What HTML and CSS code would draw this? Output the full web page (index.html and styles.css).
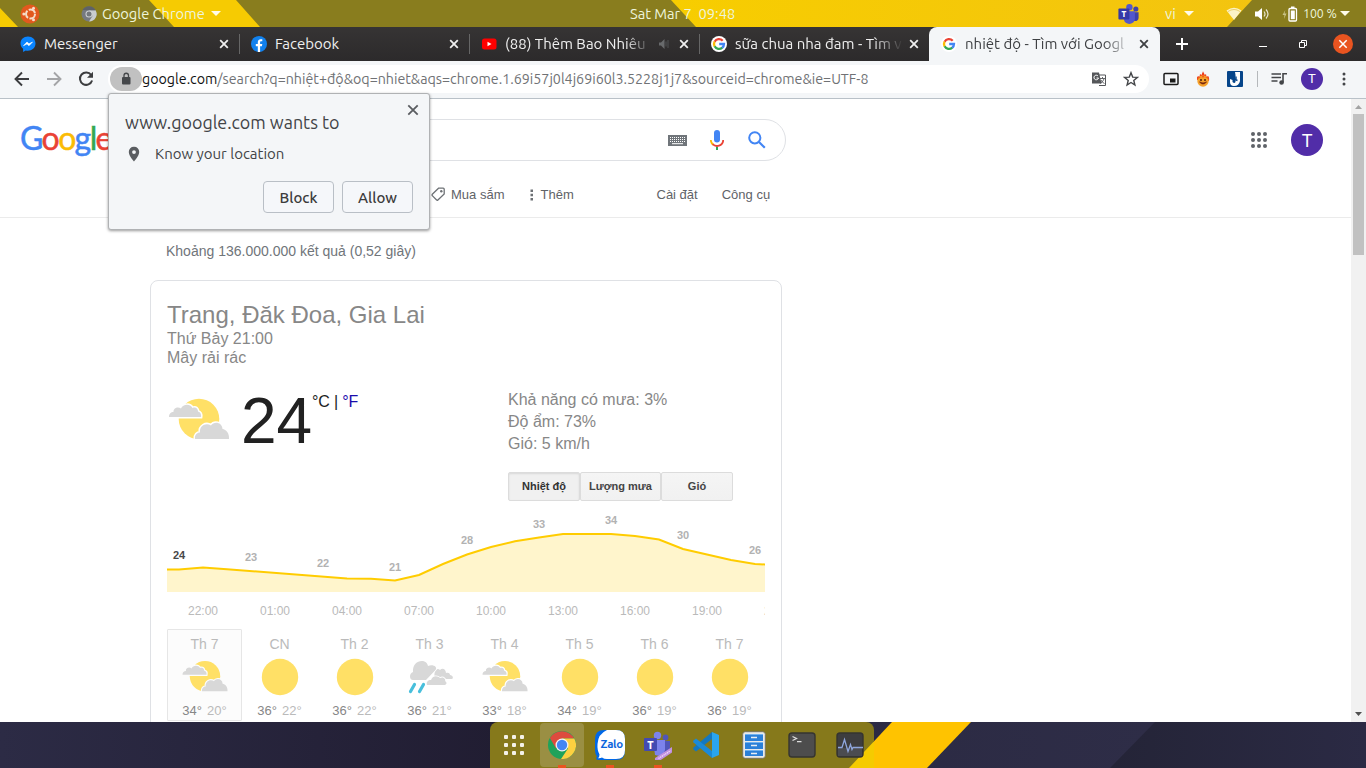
FILE: index.html
```html
<!DOCTYPE html>
<html lang="vi">
<head>
<meta charset="utf-8">
<title>nhiệt độ - Tìm với Google</title>
<link rel="stylesheet" href="styles.css">
</head>
<body>
<svg width="0" height="0" class="defs">
  <defs>
    <symbol id="x" viewBox="0 0 12 12"><path d="M2.200 2.200l7.600 7.600M9.800 2.200l-7.600 7.600" stroke="currentColor" stroke-width="1.800" fill="none"/></symbol>
    <symbol id="g" viewBox="0 0 16 16">
      <circle cx="8" cy="8" r="8" fill="#fff"/>
      <g fill="none" stroke-width="2.300">
        <path d="M11.700 4.700A5 5 0 0 0 3.600 5.700" stroke="#ea4335"/>
        <path d="M3.600 5.600A5 5 0 0 0 3.600 10.400" stroke="#fbbc05"/>
        <path d="M3.600 10.300A5 5 0 0 0 11.300 11.700" stroke="#34a853"/>
        <path d="M11.200 11.800A5 5 0 0 0 13 8H8.200" stroke="#4285f4"/>
      </g>
    </symbol>
    <symbol id="sun" viewBox="0 0 48 48"><circle cx="24" cy="24" r="18.200" fill="#ffe066"/></symbol>
    <symbol id="partly" viewBox="0 0 64 64">
      <circle cx="32" cy="31" r="20.300" fill="#ffe066"/>
      <g stroke="var(--tile, #fff)" stroke-width="3" paint-order="stroke" fill="#d8d8d8">
        <path d="M2 29C2 25.500 4 24 6.500 24C6 20 11 18 14 20.500C16 16 23 15.500 25.500 20C29 18.500 31 21 31 23.500C33.500 24 34.500 26.500 34 29Z"/>
        <path d="M28 51C27.500 47 30 44.500 33 44.500C32 38 39 34 44 37.500C47 33 55 34 55.500 41C59 41.500 62.500 45 62 51Z"/>
      </g>
    </symbol>
    <symbol id="rain" viewBox="0 0 48 48">
      <g fill="#d8d8d8" stroke="#fff" stroke-width="1.600" paint-order="stroke">
        <path d="M29 26C27 18 31 14 34 17C37 14 40 17 40 20C43 19 44 21 44 22C47 22 48 26 45.500 26Z"/>
        <path d="M7 27C3 27 3 20 7 19C6 6 21 5 22 13C27 11 32 14 29.500 17L20 27Z"/>
        <path d="M21 32C20 29 22 27 25 27C27 22 32 23 34 25C38 23 40 27 39 28C42 30 40 32 38 32Z"/>
      </g>
      <path d="M8.500 31.500l-4 7M17.500 31.500l-4 7" stroke="#48bfdc" stroke-width="3.200" stroke-linecap="round"/>
    </symbol>
    <symbol id="teams" viewBox="0 0 24 24">
      <circle cx="20" cy="6.500" r="2.800" fill="#3f42a8"/><circle cx="13" cy="4.500" r="3.500" fill="#5257cc"/>
      <path d="M16 10h7v6c0 4-5 5-7 2z" fill="#3f42a8"/>
      <path d="M7 9h12v8c0 7-11 8-12 1z" fill="#5257cc"/>
      <rect x="1" y="6" width="12" height="12" rx="1" fill="#3538a8"/>
      <text x="7" y="15.300" class="teams-t">T</text>
    </symbol>
  </defs>
</svg>

<header class="panel">
  <svg class="stripes" width="1366" height="27">
    <defs><linearGradient id="yg"><stop offset="0" stop-color="#f7cd00"/><stop offset="1" stop-color="#f3c410"/></linearGradient></defs>
    <path d="M0 8L18 27H0ZM149 0H236L260 27H174Z" fill="#f6cb02"/>
    <path d="M671 0H1252L1227 27H696Z" fill="url(#yg)"/>
  </svg>
  <div class="panel-left">
    <svg width="20" height="20" viewBox="0 0 20 20"><circle cx="10" cy="10" r="9.500" fill="#e2591e"/><circle cx="10.500" cy="10" r="4.500" fill="none" stroke="#f5ddc8" stroke-width="2" stroke-dasharray="8 1.420"/><g fill="#f5ddc8"><circle cx="3.800" cy="10" r="1.500"/><circle cx="13.500" cy="4.200" r="1.500"/><circle cx="13.500" cy="15.800" r="1.500"/></g></svg>
    <svg class="mini-chrome" width="16" height="16" viewBox="0 0 16 16"><circle cx="8" cy="8" r="7.500" fill="#767a80"/><path d="M8 4.200h6.600A7.500 7.500 0 0 1 8 15.500l3.500-5.500z" fill="#c9ccce"/><path d="M1.500 4A7.500 7.500 0 0 1 14.600 4.200H8z" fill="#5e6268"/><circle cx="8" cy="8" r="3.500" fill="#d0d3d5"/><circle cx="8" cy="8" r="2.500" fill="#73777c"/></svg>
    <span class="app-name">Google Chrome</span><i class="tri"></i>
  </div>
  <div class="clock">Sat Mar 7&nbsp; 09:48</div>
  <div class="panel-right">
    <svg width="23" height="22"><use href="#teams"/></svg>
    <span class="lang">vi</span><i class="tri"></i>
    <svg class="wifi" width="16" height="14" viewBox="0 0 16 14"><path d="M0.500 3.500Q8-2 15.500 3.500L8 13Z" fill="#fbf2c6"/><path d="M2 4.500Q8 0.500 14 4.500" fill="none" stroke="#e4c654" stroke-width=".8"/></svg>
    <svg class="vol" width="16" height="14" viewBox="0 0 16 14"><path d="M1 4.500h3L8 1v12L4 9.500H1z" fill="#fff"/><path d="M10 4.500q2 2.500 0 5M12 2.500q4 4.500 0 9" fill="none" stroke="#e8e5d0" stroke-width="1.200"/></svg>
    <svg class="bat" width="16" height="16" viewBox="0 0 16 16"><path d="M3.300 4L.5 9h2l-.5 4 2.500-5.500h-2z" fill="#c9c388"/><rect x="7" y="2.500" width="7.500" height="12.500" rx="1" fill="none" stroke="#fff" stroke-width="1.300"/><rect x="8.800" y="4.500" width="4" height="8.700" fill="#fff"/><rect x="9" y="0.500" width="3.500" height="2" fill="#fff"/></svg>
    <span class="pct">100 %</span><i class="tri"></i>
  </div>
</header>

<nav class="tabs">
  <div class="tab first"><svg width="16" height="16" viewBox="0 0 16 16"><path d="M8 .5C3.500.5.500 3.600.500 7.500c0 2.200 1 4 2.600 5.300V16l2.600-1.500c5 1.200 9.800-2 9.800-7C15.500 3.600 12.500.5 8 .5z" fill="#0a84ff"/><path d="M3.500 9.700L7 6l2 1.800L12.500 6 9 9.700 7 7.900z" fill="#fff" stroke="#fff" stroke-width=".6"/></svg><span class="t">Messenger</span><svg class="close" width="12" height="12"><use href="#x"/></svg></div>
  <div class="tab"><svg width="16" height="16" viewBox="0 0 16 16"><circle cx="8" cy="8" r="8" fill="#1181ee"/><path d="M6.800 16V10.200H4.800V7.900h2V6.200C6.800 4.200 8 3.200 9.700 3.200l1.600.1v2h-1C9.300 5.300 9.100 5.800 9.100 6.500v1.400h2.200l-.4 2.300H9.100V16z" fill="#fff"/></svg><span class="t">Facebook</span><svg class="close" width="12" height="12"><use href="#x"/></svg></div>
  <div class="tab"><svg width="16" height="16" viewBox="0 0 16 16"><rect x="1" y="2.500" width="14.500" height="11" rx="2.500" fill="#f00"/><path d="M6.500 5.800v4.500L10.500 8z" fill="#fff"/></svg><span class="t fade">(88) Thêm Bao Nhiêu</span><svg class="audio" width="12" height="12" viewBox="0 0 12 12"><path d="M1 4.500h2L6.500 1v10L3 7.500H1z" fill="#686a6c"/><path d="M8 3.500v5M10 2v8" stroke="#515355"/></svg><svg class="close" width="12" height="12"><use href="#x"/></svg></div>
  <div class="tab"><svg width="16" height="16"><use href="#g"/></svg><span class="t fade">sữa chua nha đam - Tìm v</span><svg class="close" width="12" height="12"><use href="#x"/></svg></div>
  <div class="tab active"><svg width="16" height="16"><use href="#g"/></svg><span class="t fade">nhiệt độ - Tìm với Googl</span><svg class="close" width="12" height="12"><use href="#x"/></svg></div>
  <svg class="plus" width="14" height="14" viewBox="0 0 14 14"><path d="M7 1v12M1 7h12" stroke="#fff" stroke-width="2"/></svg>
  <div class="winctl">
    <svg width="40" height="20" viewBox="0 0 40 20"><path d="M17 12.500h8" stroke="#fff"/></svg>
    <svg width="40" height="20" viewBox="0 0 40 20"><path d="M17.500 8.500h5v5h-5zM19.500 8V6.500h5v5H23" fill="none" stroke="#fff" /></svg>
    <svg class="shut" width="20" height="20" viewBox="0 0 20 20"><circle cx="10" cy="10" r="10" fill="#e95420"/><path d="M6.300 6.300l7.400 7.400M13.700 6.300l-7.400 7.400" stroke="#fff" stroke-width="1.500"/></svg>
  </div>
</nav>

<div class="toolbar">
  <span class="tb"><svg width="16" height="16" viewBox="0 0 16 16"><path d="M15 8H2M8 1.500L1.500 8 8 14.500" fill="none" stroke="#3c3d3f" stroke-width="1.900"/></svg></span>
  <span class="tb"><svg width="16" height="16" viewBox="0 0 16 16"><path d="M1 8h13M8 1.500L14.500 8 8 14.500" fill="none" stroke="#a4a5a7" stroke-width="1.900"/></svg></span>
  <span class="tb"><svg width="16" height="16" viewBox="0 0 16 16"><path d="M13.200 4A6.200 6.200 0 1 0 14.100 9.500" fill="none" stroke="#3c3d3f" stroke-width="2"/><path d="M15 .8v6H9z" fill="#3c3d3f"/></svg></span>
  <div class="omni">
    <span class="lock"><svg width="12" height="14" viewBox="0 0 12 14"><rect x="2" y="5" width="8.500" height="7.500" rx="1" fill="#45474a"/><path d="M4 5V3.500a2.200 2.200 0 0 1 4.500 0V5" fill="none" stroke="#45474a" stroke-width="1.300"/></svg></span>
    <span class="url"><b>google.com</b>/search?q=nhiệt+độ&amp;oq=nhiet&amp;aqs=chrome.1.69i57j0l4j69i60l3.5228j1j7&amp;sourceid=chrome&amp;ie=UTF-8</span>
    <span class="tb"><svg width="16" height="16" viewBox="0 0 16 16"><path d="M6.500 4h8v10.500H8" fill="#fff" stroke="#55575a"/><path d="M9 7.500h5M11.500 6v1.500M13 8q-1 3-4 4.500M10 9q1 2.500 3.500 3.500" fill="none" stroke="#55575a" stroke-width=".9"/><path d="M1 1.500h7l2.500 11H1z" fill="#55575a"/><path d="M7 5A2.300 2.300 0 1 0 7.500 7H5.500" fill="none" stroke="#fff"/></svg></span>
    <span class="tb"><svg width="16" height="16" viewBox="0 0 16 16"><path d="M8 1.700l1.700 4.400 4.700.3-3.600 3 1.100 4.600L8 11.500 4.100 14l1.100-4.600-3.600-3 4.700-.3z" fill="none" stroke="#434548" stroke-width="1.400"/></svg></span>
  </div>
  <span class="tb"><svg width="16" height="16" viewBox="0 0 16 16"><rect x="1" y="2.500" width="14" height="11" rx="1" fill="none" stroke="#1a1a1a" stroke-width="1.500"/><rect x="7" y="7.500" width="5.500" height="4" fill="#1a1a1a"/></svg></span>
  <span class="tb"><svg width="16" height="16" viewBox="0 0 16 16"><path d="M2 9Q1.500 6 3 5l1.500 1L5 3l1.500 1L8 .3 9.800 4 11 3l.5 3L13 5q1.500 1 1 5z" fill="#ef3a18"/><circle cx="8" cy="10" r="5.700" fill="#f6a12a"/><path d="M2.500 8.500Q3 5 5 6l1 1 2-3 2 3 1-1q2-1 2.500 2.500Q11 5.500 8 6.500 5 5.500 2.500 8.500z" fill="#ee5a1b"/><path d="M4.500 11q3.500 4 7 0-3.500 2-7 0" fill="#73200e" stroke="#73200e" stroke-width=".7"/><circle cx="6" cy="9" r="1" fill="#4b1f10"/><circle cx="10" cy="9" r="1" fill="#4b1f10"/></svg></span>
  <span class="tb"><svg width="16" height="16" viewBox="0 0 16 16"><rect width="16" height="16" rx="1" fill="#06458a"/><path d="M8 1h5v9q-1 5-6 5-4 0-4-4V8l2.500 1v2q2 2 3 0V4z" fill="#fff"/><path d="M9 5.500v4M7 8l3.500 1.500" stroke="#06458a" stroke-width="1.400"/></svg></span>
  <i class="tsep"></i>
  <span class="tb"><svg width="16" height="16" viewBox="0 0 16 16"><path d="M.5 3h9.500M.5 6.500h9.500M.5 10h6" stroke="#434548" stroke-width="1.600"/><path d="M12 11V2.800h4" fill="none" stroke="#434548" stroke-width="1.600"/><circle cx="10.600" cy="11.500" r="2.300" fill="#434548"/></svg></span>
  <span class="avatar small">T</span>
  <span class="tb"><svg width="4" height="16" viewBox="0 0 4 16"><g fill="#434548"><circle cx="2" cy="3" r="1.500"/><circle cx="2" cy="8" r="1.500"/><circle cx="2" cy="13" r="1.500"/></g></svg></span>
</div>

<main class="view">
  <div class="page">
    <div class="head">
      <div class="toprow">
        <div class="logo"><span class="b">G</span><span class="r">o</span><span class="y">o</span><span class="b">g</span><span class="gr">l</span><span class="r">e</span></div>
        <div class="search">
          <svg width="19" height="11" viewBox="0 0 19 11"><rect width="19" height="11" fill="#70757a"/><path d="M2 2.500h15M2 4.500h15M2 6.500h15" stroke="#fff" stroke-width="1.100" stroke-dasharray="1 1"/><path d="M4 8.700h11" stroke="#fff"/></svg>
          <svg class="mic" width="14" height="20" viewBox="0 0 14 20"><rect x="4" y="0" width="6" height="12.500" rx="3" fill="#4285f4"/><path d="M6 16.500h2V20H6z" fill="#34a853"/><path d="M.8 10A6.200 6.200 0 0 0 3.500 15" fill="none" stroke="#fbbc05" stroke-width="1.800"/><path d="M2.700 14.200C6 17.500 13 16 13.200 10" fill="none" stroke="#ea4335" stroke-width="1.800"/></svg>
          <svg class="lens" width="18" height="18" viewBox="0 0 18 18"><circle cx="6.800" cy="6.800" r="5.600" fill="none" stroke="#4285f4" stroke-width="2"/><path d="M11 11l5.800 5.800" stroke="#4285f4" stroke-width="2.200"/></svg>
        </div>
        <svg class="apps" width="16" height="16" viewBox="0 0 16 16"><g fill="#5f6368"><circle cx="2" cy="2" r="2"/><circle cx="8" cy="2" r="2"/><circle cx="14" cy="2" r="2"/><circle cx="2" cy="8" r="2"/><circle cx="8" cy="8" r="2"/><circle cx="14" cy="8" r="2"/><circle cx="2" cy="14" r="2"/><circle cx="8" cy="14" r="2"/><circle cx="14" cy="14" r="2"/></g></svg>
        <span class="avatar">T</span>
      </div>
      <div class="modes">
        <svg width="15" height="15" viewBox="0 0 15 15"><path d="M7.500 1.200L1.300 7.300q-.6.700 0 1.300l4.300 4.400q.7.600 1.300 0L13.200 7V2.200q0-1-1-1z" fill="none" stroke="#6d7175" stroke-width="1.300"/><circle cx="10.300" cy="4.300" r="1.200" fill="#6d7175"/></svg>
        <span class="shop">Mua sắm</span>
        <svg class="dots" width="4" height="12" viewBox="0 0 4 12"><path d="M.5 .5h2.500v2.500h-2.500zM.5 4.700h2.500v2.500h-2.500zM.5 9h2.500v2.500h-2.500z" fill="#6d7175"/></svg>
        <span class="more">Thêm</span><span class="set">Cài đặt</span><span>Công cụ</span>
      </div>
    </div>
    <div class="stats">Khoảng 136.000.000 kết quả (0,52 giây)</div>
    <section class="card">
      <h1>Trang, Đăk Đoa, Gia Lai</h1>
      <div class="sub">Thứ Bảy 21:00</div>
      <div class="sub">Mây rải rác</div>
      <div class="now">
        <svg width="64" height="64"><use href="#partly"/></svg>
        <span class="deg">24</span>
        <span class="unit">°C | <a>°F</a></span>
        <div class="facts"><div>Khả năng có mưa: 3%</div><div>Độ ẩm: 73%</div><div>Gió: 5 km/h</div></div>
      </div>
      <div class="switch"><span class="on">Nhiệt độ</span><span class="mid">Lượng mưa</span><span>Gió</span></div>
      <svg class="chart" width="598" height="122" viewBox="167 501 598 122">
        <path d="M167 569.500L179 569.500L203 567.500L227 569.300L347 578.500L371 578.700L395 580.500L419 575L443 564L467 554.500L491 547L515 541.300L539 537.500L563 534H611L635 536L659 539.500L683 549L707 554.500L731 560L755 564L765 564.500V592H167Z" fill="#fff5cc"/>
        <path d="M167 569.500L179 569.500L203 567.500L227 569.300L347 578.500L371 578.700L395 580.500L419 575L443 564L467 554.500L491 547L515 541.300L539 537.500L563 534H611L635 536L659 539.500L683 549L707 554.500L731 560L755 564L765 564.500" fill="none" stroke="#fc0" stroke-width="2"/>
        <g class="vals"><text x="179" y="559" class="cur">24</text><text x="251" y="561">23</text><text x="323" y="567">22</text><text x="395" y="571">21</text><text x="467" y="544">28</text><text x="539" y="528">33</text><text x="611" y="524">34</text><text x="683" y="539">30</text><text x="755" y="554">26</text></g>
        <g class="hours"><text x="203" y="615">22:00</text><text x="275" y="615">01:00</text><text x="347" y="615">04:00</text><text x="419" y="615">07:00</text><text x="491" y="615">10:00</text><text x="563" y="615">13:00</text><text x="635" y="615">16:00</text><text x="707" y="615">19:00</text><text x="779" y="615">22:00</text></g>
      </svg>
      <div class="days">
        <div class="day sel"><span>Th 7</span><svg width="48" height="48"><use href="#partly"/></svg><p><b>34°</b>20°</p></div>
        <div class="day"><span>CN</span><svg width="48" height="48"><use href="#sun"/></svg><p><b>36°</b>22°</p></div>
        <div class="day"><span>Th 2</span><svg width="48" height="48"><use href="#sun"/></svg><p><b>36°</b>22°</p></div>
        <div class="day"><span>Th 3</span><svg width="48" height="48"><use href="#rain"/></svg><p><b>36°</b>21°</p></div>
        <div class="day"><span>Th 4</span><svg width="48" height="48"><use href="#partly"/></svg><p><b>33°</b>18°</p></div>
        <div class="day"><span>Th 5</span><svg width="48" height="48"><use href="#sun"/></svg><p><b>34°</b>19°</p></div>
        <div class="day"><span>Th 6</span><svg width="48" height="48"><use href="#sun"/></svg><p><b>36°</b>19°</p></div>
        <div class="day"><span>Th 7</span><svg width="48" height="48"><use href="#sun"/></svg><p><b>36°</b>19°</p></div>
      </div>
    </section>
  </div>
  <div class="scroll">
    <svg width="15" height="15" viewBox="0 0 15 15"><path d="M4 10h7L7.500 6z" fill="#a3a3a3"/></svg>
    <i class="thumb"></i>
    <svg class="down" width="15" height="15" viewBox="0 0 15 15"><path d="M4 5h7L7.500 9z" fill="#505050"/></svg>
  </div>
</main>

<footer class="desk">
  <svg class="stripes" width="1366" height="46">
    <defs><linearGradient id="d1"><stop offset="0" stop-color="#2c2b45"/><stop offset="1" stop-color="#211d32"/></linearGradient><linearGradient id="d2"><stop offset="0" stop-color="#28273f"/><stop offset="1" stop-color="#2e2d47"/></linearGradient><linearGradient id="d3"><stop offset="0" stop-color="#242437"/><stop offset="1" stop-color="#2b2a44"/></linearGradient></defs>
    <path d="M0 0H500V46H0Z" fill="url(#d1)"/><path d="M500 0H1156V46H500Z" fill="url(#d2)"/><path d="M1155 0H1366V46H1110Z" fill="url(#d3)"/>
    <path d="M892 0H971L927 46H849Z" fill="#ffc300"/>
  </svg>
  <div class="dock">
    <svg class="stripes" width="384" height="46"><path d="M402 0H481L437 46H359Z" fill="#f5cb00"/></svg>
    <span class="slot"><svg width="20" height="20" viewBox="0 0 20 20"><g fill="#f4f2e8"><rect width="4" height="4" rx="1"/><rect x="8" width="4" height="4" rx="1"/><rect x="16" width="4" height="4" rx="1"/><rect y="8" width="4" height="4" rx="1"/><rect x="8" y="8" width="4" height="4" rx="1"/><rect x="16" y="8" width="4" height="4" rx="1"/><rect y="16" width="4" height="4" rx="1"/><rect x="8" y="16" width="4" height="4" rx="1"/><rect x="16" y="16" width="4" height="4" rx="1"/></g></svg></span>
    <span class="slot run act"><svg width="28" height="28" viewBox="0 0 28 28"><circle cx="14" cy="14" r="14" fill="#1fa25a"/><path d="M1.900 7A14 14 0 0 1 26.100 7.500H14L8 17.500z" fill="#dd4b3e"/><path d="M14 7.500h12.300A14 14 0 0 1 13 28l7-10.500z" fill="#fdd040"/><circle cx="14" cy="14" r="6.500" fill="#f2f2f2"/><circle cx="14" cy="14" r="5.200" fill="#4486f4"/></svg></span>
    <span class="slot run"><svg width="30" height="30" viewBox="0 0 30 30"><path d="M9 0h12q9 0 9 9v12q0 9-9 9H3q-3-.5-1-3.500-2-2.500-2-6V9q0-9 9-9z" fill="#0068e8"/><path d="M12 0h9q9 0 9 9v11q0 9-9 9H12q-3 0-5-1.500-1.500 1-4 .8 1.500-1.500 1.500-3.800Q2 20 2.500 14 3 4 12 0z" fill="#fff"/><text x="16.700" y="18.300" class="zalo">Zalo</text></svg></span>
    <span class="slot run"><svg width="30" height="30" viewBox="0 0 30 30"><circle cx="22.500" cy="7.500" r="2.900" fill="#5056b8"/><circle cx="14.500" cy="5.500" r="3.700" fill="#7c83eb"/><path d="M19 11h8v8q-2 5-8 4z" fill="#5056b8"/><path d="M10 10h12v10q-2 8-10 5z" fill="#7c83eb"/><rect x="1" y="8" width="13" height="13" rx="1" fill="#434ab2"/><text x="7.500" y="18.500" class="teams-t big">T</text><path d="M12 28L29 17v5.500L17 30.500h-5z" fill="#c190e0"/><path d="M15.500 28.500l12-7.700" stroke="#f0dcfa" stroke-width="1.300" stroke-dasharray="1.300 .7"/></svg></span>
    <span class="slot"><svg width="28" height="28" viewBox="0 0 28 28"><path d="M20 1l7 3v20l-7 3z" fill="#2aa5ee"/><path d="M20 1v7L4 20.500 1.500 18.500q-.8-1 0-2z" fill="#1478bf"/><path d="M20 27v-7L4 7.500 1.500 9.500q-.8 1 0 2z" fill="#1b8ad8"/></svg></span>
    <span class="slot"><svg width="24" height="28" viewBox="0 0 24 28"><rect x=".7" y=".7" width="22.600" height="26.600" rx="2.500" fill="#e8eaea" stroke="#77745a"/><path d="M3 3h18v7H3zM3 11h18v7H3zM3 19h18v6H3z" fill="#2a80d8"/><path d="M3 3h18v1H3zM3 11h18v1H3zM3 19h18v1H3z" fill="#6fb2f0"/><path d="M9 6.500h6M9 14.500h6M9 22.500h6" stroke="#e8eef4" stroke-width="1.600"/></svg></span>
    <span class="slot"><svg width="28" height="26" viewBox="0 0 28 26"><rect x="1" y="1" width="26" height="24" rx="3" fill="#4d4d4d" stroke="#353430" stroke-width="1.400"/><path d="M4.500 4.500l4 2-4 2M9 9.700h4.500" fill="none" stroke="#ddd" stroke-width="1.300"/></svg></span>
    <span class="slot"><svg width="28" height="26" viewBox="0 0 28 26"><rect x="1" y="1" width="26" height="24" rx="3" fill="#3d3d3f" stroke="#353430" stroke-width="1.400"/><path d="M2 16h24v8H2z" fill="#4b4c50"/><path d="M2 15.500h4l2.500-8 3.500 12 2.500-7 1.500 5 1-2h10" fill="none" stroke="#8fa6dc" stroke-width="1.300"/></svg></span>
  </div>
</footer>

<aside class="prompt">
  <svg class="pclose" width="14" height="14" viewBox="0 0 14 14"><path d="M2.300 2.300l9.400 9.400M11.700 2.300l-9.400 9.400" stroke="#5a5d61" stroke-width="1.800"/></svg>
  <div class="ptitle">www.google.com wants to</div>
  <div class="pline"><svg width="12" height="16" viewBox="0 0 12 16"><path d="M6 .8A5 5 0 0 0 .8 6C.8 10 6 15.500 6 15.500S11.200 10 11.200 6A5 5 0 0 0 6 .8zM6 8a1.900 1.900 0 1 1 0-3.800A1.900 1.900 0 0 1 6 8z" fill="#5a5d61" fill-rule="evenodd"/></svg><span>Know your location</span></div>
  <div class="pbtns"><button>Block</button><button>Allow</button></div>
</aside>
</body>
</html>
```

FILE: styles.css
```css
* { box-sizing: border-box; }
body { margin: 0; width: 1366px; height: 768px; overflow: hidden; display: flex; flex-direction: column; position: relative; font-family: "Liberation Sans", Arial, sans-serif; background: #fff; }
svg { display: block; flex: none; }
.defs, .stripes { position: absolute; left: 0; top: 0; }
.panel, .tabs, .toolbar, .prompt { font-family: Ubuntu, "Noto Sans", sans-serif; }
span { white-space: nowrap; }

/* desktop panel */
.panel { height: 27px; flex: none; background: #897d1e; position: relative; display: grid; grid-template-columns: 630px 106px 630px; align-items: center; color: #eef5dc; font-size: 14.670px; line-height: 20px; }
.panel > div { position: relative; display: flex; align-items: center; white-space: nowrap; }
.panel-left { padding-left: 20px; }
.mini-chrome { margin-left: 41px; }
.app-name { margin-left: 5px; width: 105px; }
.tri { border: 5px solid transparent; border-top-color: #fffbe8; border-bottom: 0; margin-left: 4px; flex: none; }
.panel-right { padding-left: 381px; }
.lang { margin-left: 25px; width: 15px; }
.wifi { margin-left: 32px; }
.vol { margin-left: 12px; }
.bat { margin-left: 12px; }
.pct { margin-left: 5px; width: 33px; font-size: 12.300px; }

/* browser tabs */
.tabs { height: 34px; flex: none; display: flex; align-items: center; padding-left: 9px; background: linear-gradient(#363434, #2c2a2b); color: #efefef; font-size: 15px; }
.tab { width: 230px; height: 20px; display: flex; align-items: center; padding: 0 9px 0 11px; border-left: 1px solid #666; flex: none; }
.tab.first { border-color: transparent; padding-left: 10px; }
.tab .t { margin-left: 8px; flex: 1; overflow: hidden; line-height: 20px; }
.tab .close { margin-left: 5px; }
.audio { margin-left: 6px; margin-right: 3px; }
.fade { -webkit-mask-image: linear-gradient(90deg, #000 82%, transparent); mask-image: linear-gradient(90deg, #000 82%, transparent); }
.tab.active { width: 231px; height: 34px; background: #f4f6f8; color: #3e4043; border: 0; padding-left: 12px; padding-right: 10px; border-radius: 8px 8px 0 0; }
.plus { margin-left: 15px; }
.winctl { margin-left: auto; display: flex; padding-right: 13px; }
.shut { margin-left: 11px; }

/* toolbar */
.toolbar { height: 38px; flex: none; display: flex; align-items: center; background: #f4f6f8; border-bottom: 1px solid #b9c1c8; padding: 0 6px 1px; }
.tb { width: 32px; display: flex; justify-content: center; flex: none; }
.omni { margin: 0 6px; width: 1041px; height: 28px; border-radius: 14px; background: #fff; display: flex; align-items: center; padding: 0 2px; }
.lock { width: 32px; height: 24px; border-radius: 12px; background: #c1c1c1; display: flex; align-items: center; justify-content: center; }
.url { flex: 1; color: #707275; font-size: 14.260px; line-height: 20px; }
.url b { color: #111; font-weight: 400; }
.tsep { width: 1px; height: 16px; background: #b5b8bb; margin: 0 5px 0 6px; }
.avatar { width: 32px; height: 32px; border-radius: 50%; background: #512da8; color: #fff; font: 18px/33px "Roboto", sans-serif; text-align: center; flex: none; }
.avatar.small { width: 22px; height: 22px; font-size: 13px; line-height: 22px; margin: 0 5px 0 6px; }

/* viewport */
.view { height: 623px; flex: none; display: flex; overflow: hidden; }
.page { width: 1351px; height: 623px; overflow: hidden; }
.scroll { width: 15px; background: #f1f1f1; display: flex; flex-direction: column; }
.thumb { height: 141px; margin: 0 2px; background: #c1c1c1; }
.down { margin-top: auto; }

.head { height: 119px; border-bottom: 1px solid #ebebeb; padding-top: 20px; }
.toprow { display: flex; align-items: center; height: 42px; padding-left: 20px; }
.logo { width: 130px; height: 42px; font: 32px/38px Lato, sans-serif; letter-spacing: -1.600px; -webkit-text-stroke: .5px; }
.logo .b { color: #4285f4; } .logo .r { color: #ea4335; } .logo .y { color: #fbbc05; } .logo .gr { color: #34a853; }
.search { width: 636px; height: 42px; border: 1px solid #dfe1e5; border-radius: 21px; display: flex; align-items: center; justify-content: flex-end; padding-right: 19px; }
.mic { margin-left: 23px; }
.lens { margin-left: 24px; }
.apps { margin-left: 465px; margin-right: 24px; }
.modes { display: flex; align-items: center; font-size: 13px; line-height: 15px; color: #5f6368; padding: 26px 0 0 431px; }
.shop { margin-left: 5px; width: 54px; }
.dots { margin-left: 25px; }
.more { margin-left: 6.500px; width: 34px; }
.set { margin: 0 24px 0 82px; }
.stats { font-size: 14px; line-height: 16px; color: #70757a; padding: 25px 0 0 166px; }

.card { margin: 21px 0 0 150px; width: 632px; height: 500px; border: 1px solid #dfe1e5; border-radius: 8px; padding: 20px 16px 0; color: #878787; }
.card h1 { margin: 0; font-size: 24px; font-weight: 400; line-height: 28px; }
.sub { font-size: 16px; line-height: 19px; }
.now { display: flex; align-items: flex-start; height: 66px; margin-top: 21px; }
.deg { font-size: 64px; line-height: 64px; color: #212121; margin: 1px 0 0 10px; width: 71px; }
.unit { font-size: 16px; line-height: 18px; color: #212121; margin: 5px 0 0 0; width: 196px; letter-spacing: -.150px; }
.unit a { color: #1a0dab; }
.facts { font-size: 16px; line-height: 22px; padding-top: 1px; }
.switch { display: flex; margin: 18px 0 0 341px; height: 29px; }
.switch span { width: 72px; border: 1px solid #dcdcdc; border-radius: 2px; background: linear-gradient(#f5f5f5, #f1f1f1); font: bold 11px/27px "Liberation Sans", sans-serif; color: #444; text-align: center; }
.switch .mid { width: 81px; }
.switch .on { background: #f0f0f0; box-shadow: inset 0 1px 2px rgba(0,0,0,.1); color: #333; }
.vals { font: bold 11px "Liberation Sans", sans-serif; fill: #b2b2b2; text-anchor: middle; }
.vals .cur { fill: #484848; }
.hours { font: 12px "Liberation Sans", sans-serif; fill: #bababa; text-anchor: middle; }
.days { display: flex; margin-top: 6px; }
.day { width: 75px; height: 92px; border: 1px solid transparent; display: flex; flex-direction: column; align-items: center; padding-top: 6px; font-size: 14px; line-height: 16px; color: #bababa; border-radius: 1px; flex: none; }
.day.sel { background: #fcfcfc; border-color: #e6e6e6; --tile: #fcfcfc; }
.day p { margin: 2px 0 0; font-size: 13px; }
.day b { font-weight: 400; color: #878787; margin-right: 5px; }
.day svg { margin-top: 1px; }

/* dock */
.desk { height: 46px; flex: none; position: relative; display: flex; padding-left: 490px; }
.dock { position: relative; width: 384px; height: 46px; background: #86791b; border-radius: 8px 8px 0 0; overflow: hidden; display: flex; }
.slot { width: 48px; height: 46px; display: flex; align-items: center; justify-content: center; position: relative; }
.slot.act { width: 44px; height: 44px; margin: 1px 2px; border-radius: 4px; background: #9a8f43; }
.run::after { content: ""; position: absolute; bottom: 0; left: 20px; width: 8px; height: 3px; background: #e95420; }
.act.run::after { left: 18px; bottom: -1px; }
.teams-t { font: bold 9px "Noto Sans", sans-serif; fill: #fff; text-anchor: middle; }
.teams-t.big { font-size: 11px; }
.zalo { font: bold 11.500px Ubuntu, "Noto Sans", sans-serif; fill: #0c66dd; text-anchor: middle; letter-spacing: -.3px; }

/* permission prompt */
.prompt { position: absolute; left: 108px; top: 93px; width: 322px; height: 137px; background: #f4f6f8; border: 1px solid #b0b2b4; border-radius: 3px; box-shadow: 0 1px 3px rgba(0,0,0,.4); padding: 16px 16px 0; color: #424447; }
.pclose { position: absolute; right: 9px; top: 9px; }
.ptitle { font-size: 17.900px; line-height: 24px; white-space: nowrap; }
.pline { display: flex; align-items: center; font-size: 15px; line-height: 20px; margin-top: 10px; padding-left: 3px; }
.pline span { margin-left: 15px; }
.pbtns { display: flex; justify-content: flex-end; gap: 8px; margin-top: 17px; }
.pbtns button { width: 71px; height: 32px; padding: 0; border: 1px solid #b9bfc6; border-radius: 4px; background: #f5f7fa; color: #3c3c3c; font: 500 15px Ubuntu, "Noto Sans", sans-serif; }
```
